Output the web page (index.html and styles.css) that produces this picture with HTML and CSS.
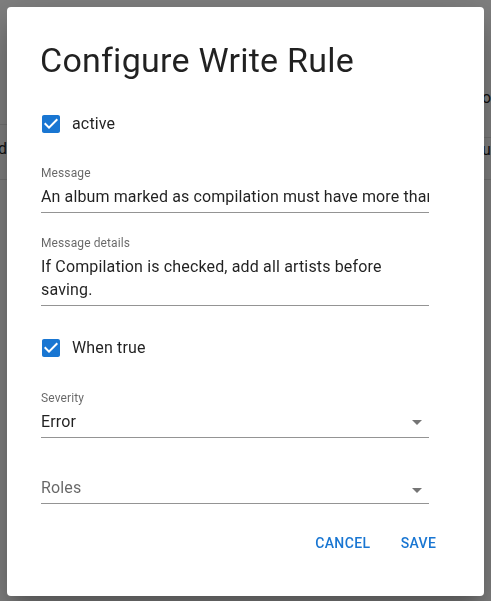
FILE: index.html
```html
<!DOCTYPE html>
<html lang="en">
<head>
<meta charset="utf-8">
<title>Configure Write Rule</title>
<link rel="stylesheet" href="styles.css">
</head>
<body>
<div class="page">
  <div class="bg-col bg-left">
    <div class="bg-row bg-row-left"><span class="bg-text bg-text-left">di</span></div>
  </div>
  <div class="bg-col bg-right">
    <div class="bg-row bg-row-r1"><span class="bg-text">ol</span></div>
    <div class="bg-row bg-row-r2"><span class="bg-text">u</span></div>
  </div>
</div>

<div class="dialog" role="dialog">
  <h2 class="title">Configure Write Rule</h2>

  <div class="check-row first-check">
    <span class="check-btn">
      <svg class="check-icon" viewBox="0 0 24 24" width="24" height="24"><path d="M19 3H5c-1.11 0-2 .9-2 2v14c0 1.1.89 2 2 2h14c1.11 0 2-.9 2-2V5c0-1.1-.89-2-2-2zm-9 14l-5-5 1.41-1.41L10 14.170l7.590-7.590L19 8l-9 9z"/></svg>
    </span>
    <span class="check-label">active</span>
  </div>

  <div class="field field-message">
    <span class="label">Message</span>
    <div class="input nowrap">An album marked as compilation must have more than one artist</div>
  </div>

  <div class="field field-details">
    <span class="label">Message details</span>
    <div class="input">If Compilation is checked, add all artists before saving.</div>
  </div>

  <div class="check-row second-check">
    <span class="check-btn">
      <svg class="check-icon" viewBox="0 0 24 24" width="24" height="24"><path d="M19 3H5c-1.11 0-2 .9-2 2v14c0 1.1.89 2 2 2h14c1.11 0 2-.9 2-2V5c0-1.1-.89-2-2-2zm-9 14l-5-5 1.41-1.41L10 14.170l7.590-7.590L19 8l-9 9z"/></svg>
    </span>
    <span class="check-label">When true</span>
  </div>

  <div class="field field-severity">
    <span class="label">Severity</span>
    <div class="input select">Error
      <svg class="arrow" viewBox="0 0 24 24" width="24" height="24"><path d="M7 10l5 5 5-5z"/></svg>
    </div>
  </div>

  <div class="field field-roles">
    <div class="input select placeholder">Roles
      <svg class="arrow arrow-low" viewBox="0 0 24 24" width="24" height="24"><path d="M7 10l5 5 5-5z"/></svg>
    </div>
  </div>

  <div class="actions">
    <button class="btn" type="button">Cancel</button>
    <button class="btn" type="button">Save</button>
  </div>
</div>
</body>
</html>
```

FILE: styles.css
```css
html, body {
  margin: 0;
  padding: 0;
}

body {
  background: #808080;
  font-family: Roboto, "Liberation Sans", Arial, sans-serif;
  width: 491px;
  height: 601px;
  overflow: hidden;
}

/* Background page (dimmed by backdrop) */
.page {
  display: flex;
  justify-content: space-between;
  height: 601px;
}

.bg-col {
  display: flex;
  flex-direction: column;
}

.bg-left {
  width: 20px;
  padding-top: 124px;
}

.bg-right {
  width: 14px;
  padding-top: 88px;
}

.bg-row {
  border-bottom: 1px solid #737373;
  box-sizing: border-box;
}

.bg-row-left {
  border-top: 1px solid #737373;
  height: 56px;
  padding-top: 14px;
}

.bg-row-r1 {
  height: 50px;
}

.bg-row-r2 {
  height: 42px;
}

.bg-text {
  display: block;
  font-size: 16px;
  line-height: 20px;
  color: #111;
  padding-left: 5px;
  white-space: nowrap;
}

.bg-text-left {
  padding-left: 0;
  margin-left: -2px;
}

.bg-row-r2 .bg-text {
  line-height: 24px;
}

/* Dialog */
.dialog {
  position: fixed;
  left: 7px;
  top: 7px;
  width: 477px;
  height: 589px;
  box-sizing: border-box;
  padding: 33px 33.5px 0 34px;
  background: #fff;
  border-radius: 4px;
  box-shadow: 0 11px 15px -7px rgba(0, 0, 0, 0.2), 0 24px 38px 3px rgba(0, 0, 0, 0.14), 0 9px 46px 8px rgba(0, 0, 0, 0.12);
  display: flex;
  flex-direction: column;
  color: rgba(0, 0, 0, 0.87);
}

.title {
  margin: 0 0 0 -1px;
  font-size: 34px;
  line-height: 40px;
  font-weight: 400;
  letter-spacing: 0.25px;
  color: rgba(0, 0, 0, 0.87);
}

.check-row {
  display: flex;
  align-items: center;
  height: 42px;
  margin-left: -11px;
}

.first-check {
  margin-top: 23px;
}

.second-check {
  margin-top: 21px;
}

.check-btn {
  width: 42px;
  height: 42px;
  display: flex;
  align-items: center;
  justify-content: center;
}

.check-icon {
  fill: #1976d2;
  display: block;
}

.check-label {
  font-size: 16px;
  line-height: 24px;
  letter-spacing: 0.15px;
}

.field {
  position: relative;
  width: 388px;
  padding-top: 16px;
}

.field-message {
  margin-top: 20px;
}

.field-details {
  margin-top: 22px;
}

.field-severity {
  margin-top: 21px;
}

.field-roles {
  margin-top: 18px;
}

.label {
  position: absolute;
  left: 0;
  top: 0;
  font-size: 12px;
  line-height: 17.25px;
  letter-spacing: 0.11px;
  color: rgba(0, 0, 0, 0.6);
  white-space: nowrap;
}

.input {
  position: relative;
  padding: 4px 0 4px;
  border-bottom: 1px solid rgba(0, 0, 0, 0.42);
  font-size: 16px;
  line-height: 23px;
  letter-spacing: 0.15px;
  color: rgba(0, 0, 0, 0.87);
}

.nowrap {
  white-space: nowrap;
  overflow: hidden;
  letter-spacing: 0.12px;
}

.placeholder {
  color: rgba(0, 0, 0, 0.6);
}

.arrow {
  position: absolute;
  right: 0;
  top: 4px;
  fill: rgba(0, 0, 0, 0.54);
}

.arrow-low {
  top: 6px;
}

.actions {
  display: flex;
  justify-content: flex-end;
  gap: 8px;
  margin-top: 21px;
}

.btn {
  min-width: 64px;
  padding: 6px 8px;
  border: none;
  background: none;
  font-family: Roboto, "Liberation Sans", Arial, sans-serif;
  font-size: 14px;
  font-weight: 500;
  line-height: 24.5px;
  letter-spacing: 0.4px;
  text-transform: uppercase;
  color: #1976d2;
  border-radius: 4px;
}
```
